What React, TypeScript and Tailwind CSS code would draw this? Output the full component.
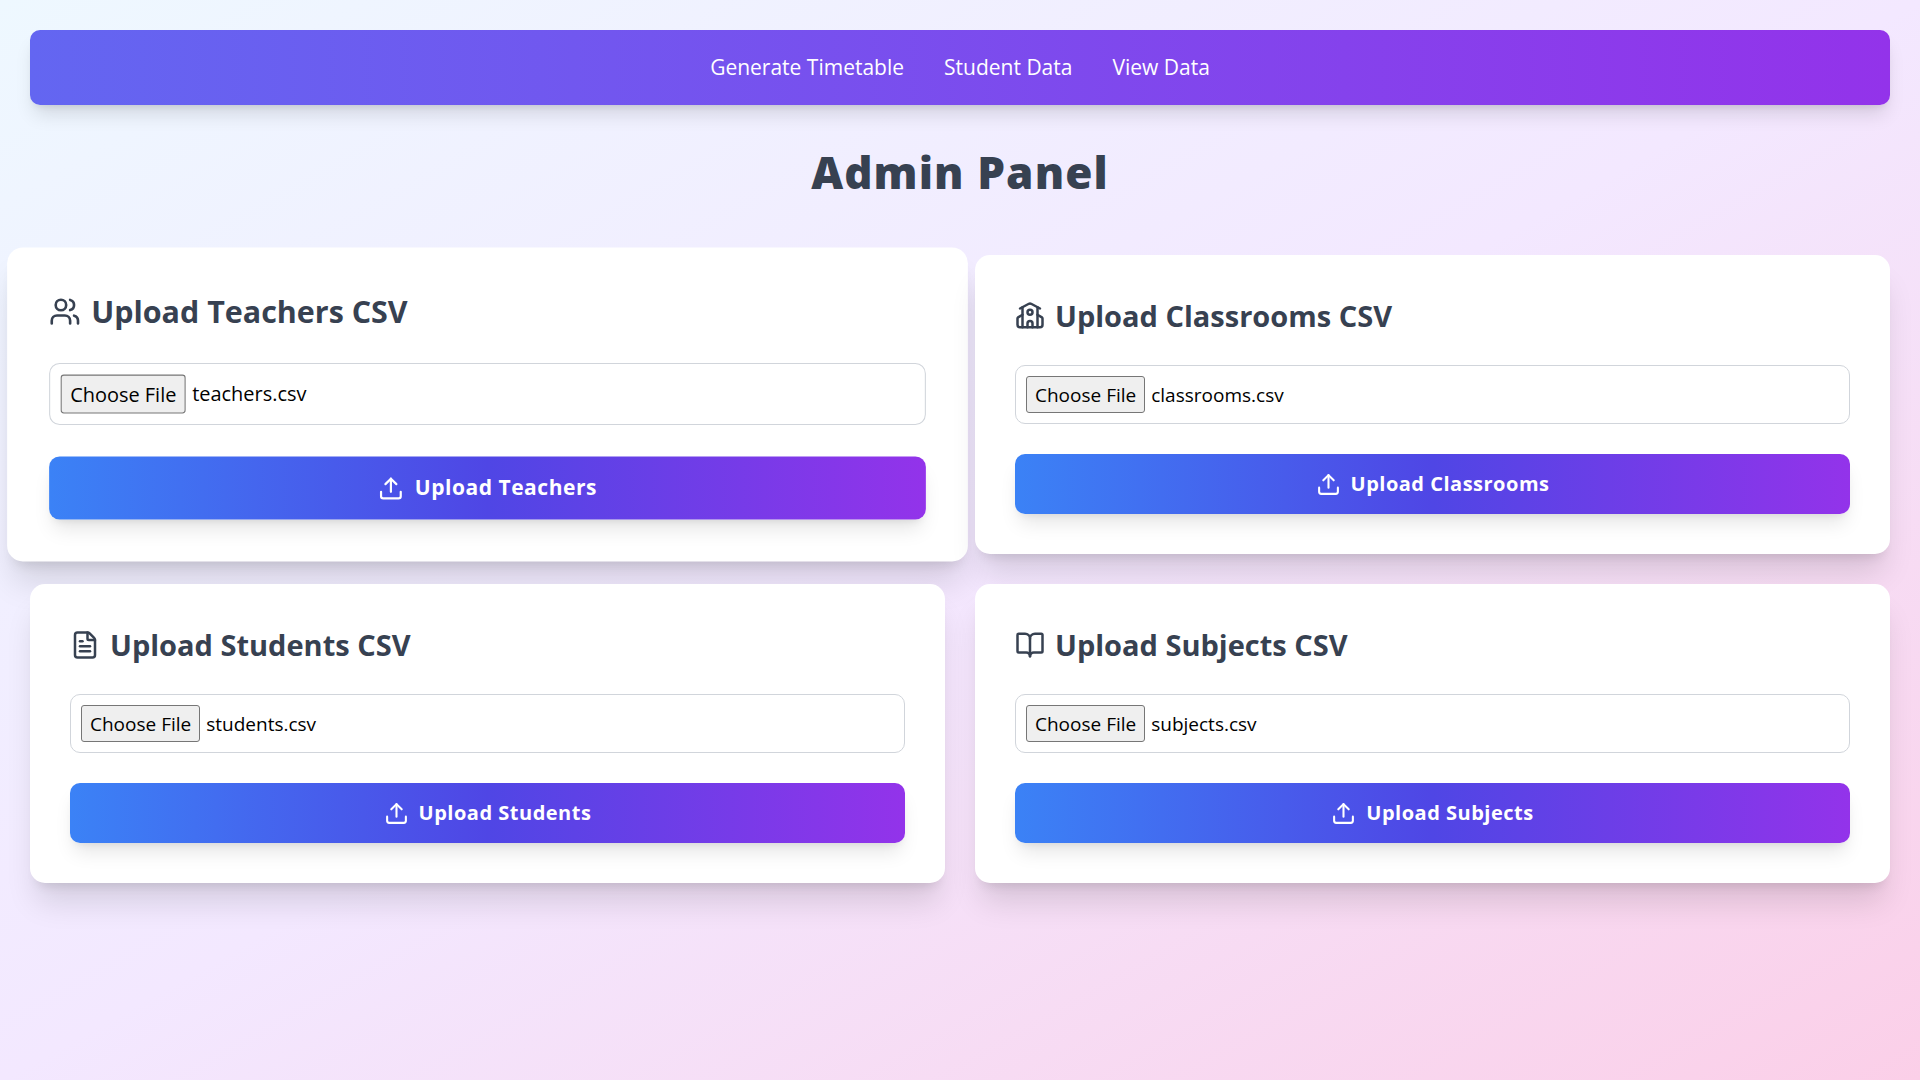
import { useEffect, useId, useRef } from "react";
import { BookOpen, FileText, School, Upload, Users, type LucideIcon } from "lucide-react";

type UploadCardProps = {
  name: string;
  fileName: string;
  Icon: LucideIcon;
  raised?: boolean;
};

const cards: UploadCardProps[] = [
  { name: "Teachers", fileName: "teachers.csv", Icon: Users, raised: true },
  { name: "Classrooms", fileName: "classrooms.csv", Icon: School },
  { name: "Students", fileName: "students.csv", Icon: FileText },
  { name: "Subjects", fileName: "subjects.csv", Icon: BookOpen },
];

const links = ["Generate Timetable", "Student Data", "View Data"];

function UploadCard({ name, fileName, Icon, raised }: UploadCardProps) {
  const id = useId();
  const input = useRef<HTMLInputElement>(null);

  useEffect(() => {
    const transfer = new DataTransfer();
    transfer.items.add(new File([""], fileName, { type: "text/csv" }));
    if (input.current) input.current.files = transfer.files;
  }, [fileName]);

  return (
    <section
      className={
        "relative rounded-[15px] bg-white p-10 shadow-[0_25px_31px_-6px_rgba(0,0,0,0.12),0_10px_12px_-8px_rgba(0,0,0,0.12)]" +
        (raised ? " scale-105" : "")
      }
    >
      <h2 className="mb-7 text-[29px] leading-[42px] font-bold text-[#374151]">
        <label htmlFor={id} className="flex items-center gap-[10px]">
          <Icon className="size-[30px]" />
          Upload {name} CSV
        </label>
      </h2>
      <input
        ref={input}
        id={id}
        type="file"
        accept=".csv"
        className="mb-[30px] block w-full rounded-[10px] border border-[#d1d5db] p-[10px] text-[19px] leading-7 text-black file:mr-1.5 file:h-[37px] file:rounded-[3px] file:border file:border-solid file:border-[#767676] file:bg-[#efefef] file:px-2 file:text-black"
      />
      <button
        type="button"
        className="flex h-[60px] w-full items-center justify-center gap-[10px] rounded-[10px] bg-linear-to-r/srgb from-[#3b82f6] via-[#4f46e5] to-[#9333ea] text-[20px] font-bold tracking-wide text-white shadow-[0_13px_19px_-4px_rgba(0,0,0,0.1),0_5px_8px_-5px_rgba(0,0,0,0.1)]"
      >
        <Upload className="size-[25px]" />
        Upload {name}
      </button>
    </section>
  );
}

export default function App() {
  return (
    <div className="min-h-screen bg-linear-to-br/srgb from-[#eef8ff] via-[#f3e8ff] to-[#fbcfe8] p-[30px] font-['Open_Sans','Noto_Sans',sans-serif]">
      <nav className="flex justify-center gap-10 rounded-[10px] bg-linear-to-r/srgb from-[#6366f1] to-[#9333ea] p-5 text-[21px] leading-[35px] text-white shadow-[0_13px_19px_-4px_rgba(0,0,0,0.12),0_5px_8px_-5px_rgba(0,0,0,0.12)]">
        {links.map((link) => (
          <a key={link} href="#">
            {link}
          </a>
        ))}
      </nav>
      <main>
        <h1 className="mt-10 mb-14 text-center text-[44px] leading-[54px] font-extrabold tracking-wide text-[#374151]">
          Admin Panel
        </h1>
        <div className="grid grid-cols-2 gap-[30px]">
          {cards.map((card) => (
            <UploadCard key={card.name} {...card} />
          ))}
        </div>
      </main>
    </div>
  );
}
